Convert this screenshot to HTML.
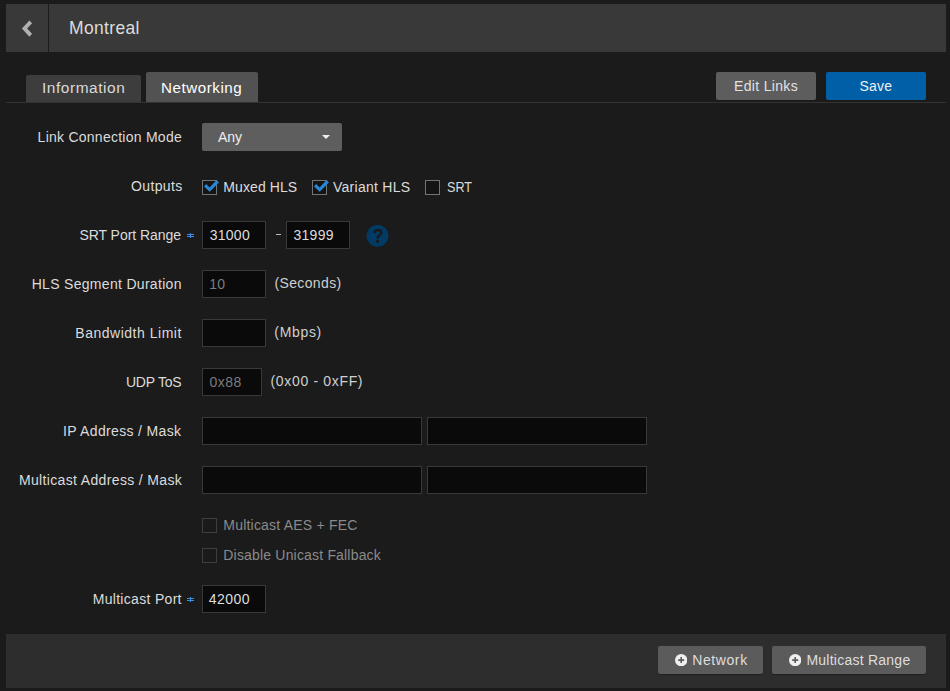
<!DOCTYPE html>
<html><head><meta charset="utf-8">
<style>
*{box-sizing:border-box;margin:0;padding:0}
html,body{width:950px;height:691px;overflow:hidden;background:#1b1b1b;font-family:"Liberation Sans",sans-serif;font-size:14px;color:#dcdcdc}
.a{position:absolute}
.t{position:absolute;white-space:nowrap}
.tab{position:absolute;border-radius:2px 2px 0 0}
.btn{position:absolute;border-radius:2px;background:#5c5c5c}
.inp{position:absolute;background:#0a0a0a;border:1px solid #393939;height:28px}
.cb{position:absolute;width:15px;height:15px;border:1px solid #737373;background:#141414}
.cbd{border-color:#3e3e3e;background:#1a1a1a}
</style></head><body>
<div class="a" style="left:6px;top:4px;width:940px;height:48px;background:#393939"></div>
<div class="a" style="left:48px;top:4px;width:1px;height:48px;background:#1c1c1c"></div>
<svg class="a" style="left:0;top:0" width="40" height="40" viewBox="0 0 40 40"><path d="M21.9 28.5 L29.4 20.4 L32.1 23.3 L27.1 28.5 L32.1 33.8 L29.4 36.7 Z" fill="#b0b0b0"/></svg>

<div class="tab" style="left:26px;top:75px;width:115px;height:27px;background:#3d3d3d"></div>
<div class="tab" style="left:146px;top:72px;width:112px;height:30px;background:#525252"></div>
<div class="a" style="left:6px;top:102px;width:940px;height:1px;background:#323232"></div>

<div class="btn" style="left:716px;top:72px;width:100px;height:28px;background:#5d5d5d"></div>
<div class="btn" style="left:826px;top:72px;width:100px;height:28px;background:#005fa6"></div>

<div class="btn" style="left:202px;top:123px;width:140px;height:28px;background:#5e5e5e"></div>
<svg class="a" style="left:322px;top:135px" width="8" height="4" viewBox="0 0 8 4"><path d="M0 0 L8 0 L4 4 Z" fill="#eeeeee"/></svg>

<div class="cb" style="left:202px;top:180px"></div>
<svg class="a" style="left:202px;top:180px" width="20" height="16" viewBox="0 0 20 16"><path d="M2 6.4 L4.2 4.1 L7.6 7.4 L14.6 0 L16.9 2.4 L7.7 11.8 Z" fill="#2886d6"/></svg>
<div class="cb" style="left:312px;top:180px"></div>
<svg class="a" style="left:312px;top:180px" width="20" height="16" viewBox="0 0 20 16"><path d="M2 6.4 L4.2 4.1 L7.6 7.4 L14.6 0 L16.9 2.4 L7.7 11.8 Z" fill="#2886d6"/></svg>
<div class="cb" style="left:425px;top:180px"></div>

<svg class="a" style="left:186px;top:232px" width="9" height="7" viewBox="0 0 9 7"><path d="M1 2.5 H8 M1 4.5 H8 M4.5 1 V6" stroke="#3a8ee6" stroke-width="1" fill="none"/></svg>
<div class="inp" style="left:202px;top:221px;width:64px"></div>
<div class="a" style="left:276px;top:234px;width:5px;height:1px;background:#bbbbbb"></div>
<div class="inp" style="left:286px;top:221px;width:64px"></div>
<svg class="a" style="left:366px;top:224px" width="24" height="24" viewBox="0 0 24 24"><circle cx="11.5" cy="11.8" r="10.9" fill="#003b66"/><path d="M8.3 9.0 C8.6 6.9 10 6.0 11.8 6.0 C13.9 6.0 15.3 7.2 15.3 8.9 C15.3 10.7 13.6 11.4 12.6 12.2 C11.9 12.8 11.6 13.4 11.6 14.7" stroke="#1a1a1a" stroke-width="2.4" fill="none"/><rect x="10.1" y="16.1" width="2.9" height="2.7" fill="#1b1b1b"/></svg>

<div class="inp" style="left:202px;top:270px;width:64px"></div>
<div class="inp" style="left:202px;top:319px;width:64px"></div>
<div class="inp" style="left:202px;top:368px;width:60px"></div>
<div class="inp" style="left:202px;top:417px;width:220px"></div>
<div class="inp" style="left:427px;top:417px;width:220px"></div>
<div class="inp" style="left:202px;top:466px;width:220px"></div>
<div class="inp" style="left:427px;top:466px;width:220px"></div>

<div class="cb cbd" style="left:202px;top:518px"></div>
<div class="cb cbd" style="left:202px;top:548px"></div>

<svg class="a" style="left:186px;top:596px" width="9" height="7" viewBox="0 0 9 7"><path d="M1 2.5 H8 M1 4.5 H8 M4.5 1 V6" stroke="#3a8ee6" stroke-width="1" fill="none"/></svg>
<div class="inp" style="left:202px;top:585px;width:64px"></div>

<div class="a" style="left:6px;top:634px;width:940px;height:54px;background:#2d2d2d"></div>
<div class="btn" style="left:658px;top:646px;width:105px;height:28px;background:#5b5b5b;box-shadow:0 1px 1px rgba(0,0,0,.3)"></div>
<div class="btn" style="left:772px;top:646px;width:154px;height:28px;background:#5b5b5b;box-shadow:0 1px 1px rgba(0,0,0,.3)"></div>
<svg class="a" style="left:674.8px;top:653.8px" width="12.4" height="12.4" viewBox="0 0 12.4 12.4"><circle cx="6.2" cy="6.2" r="6.15" fill="#efefef"/><path d="M3.2 6.1 H9.2 M6.2 3.1 V9" stroke="#5b5b5b" stroke-width="1.6"/></svg>
<svg class="a" style="left:788.8px;top:653.8px" width="12.4" height="12.4" viewBox="0 0 12.4 12.4"><circle cx="6.2" cy="6.2" r="6.15" fill="#efefef"/><path d="M3.2 6.1 H9.2 M6.2 3.1 V9" stroke="#5b5b5b" stroke-width="1.6"/></svg>
<div class="t" style="left:69px;top:18px;font-size:17.5px;line-height:20px;letter-spacing:0.33px;color:#dcdcdc;">Montreal</div>
<div class="t" style="left:41.5px;top:78px;font-size:14px;line-height:20px;letter-spacing:0.5px;color:#dadada;transform:scaleX(1.104);transform-origin:0 0">Information</div>
<div class="t" style="left:161px;top:78px;font-size:14px;line-height:20px;letter-spacing:0.5px;color:#ffffff;transform:scaleX(1.083);transform-origin:0 0">Networking</div>
<div class="t" style="left:734px;top:76px;font-size:14px;line-height:20px;letter-spacing:0.33px;color:#e2e2e2;">Edit Links</div>
<div class="t" style="left:859.6px;top:76px;font-size:14px;line-height:20px;letter-spacing:0.17px;color:#f0f0f0;">Save</div>
<div class="t" style="left:37.6px;top:127px;font-size:14px;line-height:20px;letter-spacing:0.253px;color:#dcdcdc;">Link Connection Mode</div>
<div class="t" style="left:218px;top:127px;font-size:14px;line-height:20px;letter-spacing:0px;color:#eeeeee;">Any</div>
<div class="t" style="left:131px;top:176px;font-size:14px;line-height:20px;letter-spacing:0.367px;color:#dcdcdc;">Outputs</div>
<div class="t" style="left:223.3px;top:177px;font-size:14px;line-height:20px;letter-spacing:0.088px;color:#dcdcdc;">Muxed HLS</div>
<div class="t" style="left:333px;top:177px;font-size:14px;line-height:20px;letter-spacing:0.26px;color:#dcdcdc;">Variant HLS</div>
<div class="t" style="left:446.8px;top:177px;font-size:14px;line-height:20px;letter-spacing:0px;color:#dcdcdc;transform:scaleX(0.90);transform-origin:0 0">SRT</div>
<div class="t" style="left:79.4px;top:225px;font-size:14px;line-height:20px;letter-spacing:-0.04px;color:#dcdcdc;">SRT Port Range</div>
<div class="t" style="left:209.7px;top:225px;font-size:14px;line-height:20px;letter-spacing:0.275px;color:#dddddd;">31000</div>
<div class="t" style="left:293.5px;top:225px;font-size:14px;line-height:20px;letter-spacing:0.275px;color:#dddddd;">31999</div>
<div class="t" style="left:31.7px;top:274px;font-size:14px;line-height:20px;letter-spacing:0.305px;color:#dcdcdc;">HLS Segment Duration</div>
<div class="t" style="left:209.2px;top:274px;font-size:14px;line-height:20px;letter-spacing:0.3px;color:#7c7c7c;">10</div>
<div class="t" style="left:274.4px;top:273px;font-size:14px;line-height:20px;letter-spacing:0.375px;color:#cfcfcf;">(Seconds)</div>
<div class="t" style="left:75.3px;top:323px;font-size:14px;line-height:20px;letter-spacing:0.514px;color:#dcdcdc;">Bandwidth Limit</div>
<div class="t" style="left:274.3px;top:322px;font-size:14px;line-height:20px;letter-spacing:0.68px;color:#cfcfcf;">(Mbps)</div>
<div class="t" style="left:125.9px;top:372px;font-size:14px;line-height:20px;letter-spacing:-0.233px;color:#dcdcdc;">UDP ToS</div>
<div class="t" style="left:209.5px;top:372px;font-size:14px;line-height:20px;letter-spacing:0.5px;color:#7c7c7c;">0x88</div>
<div class="t" style="left:270.5px;top:371px;font-size:14px;line-height:20px;letter-spacing:0.667px;color:#cfcfcf;">(0x00 - 0xFF)</div>
<div class="t" style="left:63px;top:421px;font-size:14px;line-height:20px;letter-spacing:0.344px;color:#dcdcdc;">IP Address / Mask</div>
<div class="t" style="left:18.9px;top:470px;font-size:14px;line-height:20px;letter-spacing:0.352px;color:#dcdcdc;">Multicast Address / Mask</div>
<div class="t" style="left:223.3px;top:515px;font-size:14px;line-height:20px;letter-spacing:0.206px;color:#8a8a8a;">Multicast AES + FEC</div>
<div class="t" style="left:223.3px;top:545px;font-size:14px;line-height:20px;letter-spacing:0.183px;color:#8a8a8a;">Disable Unicast Fallback</div>
<div class="t" style="left:92.7px;top:589px;font-size:14px;line-height:20px;letter-spacing:0.308px;color:#dcdcdc;">Multicast Port</div>
<div class="t" style="left:208.8px;top:589px;font-size:14px;line-height:20px;letter-spacing:0.425px;color:#dddddd;">42000</div>
<div class="t" style="left:692.2px;top:650px;font-size:14px;line-height:20px;letter-spacing:0.6px;color:#dedede;">Network</div>
<div class="t" style="left:806.4px;top:650px;font-size:14px;line-height:20px;letter-spacing:0.243px;color:#dedede;">Multicast Range</div>
</body></html>
